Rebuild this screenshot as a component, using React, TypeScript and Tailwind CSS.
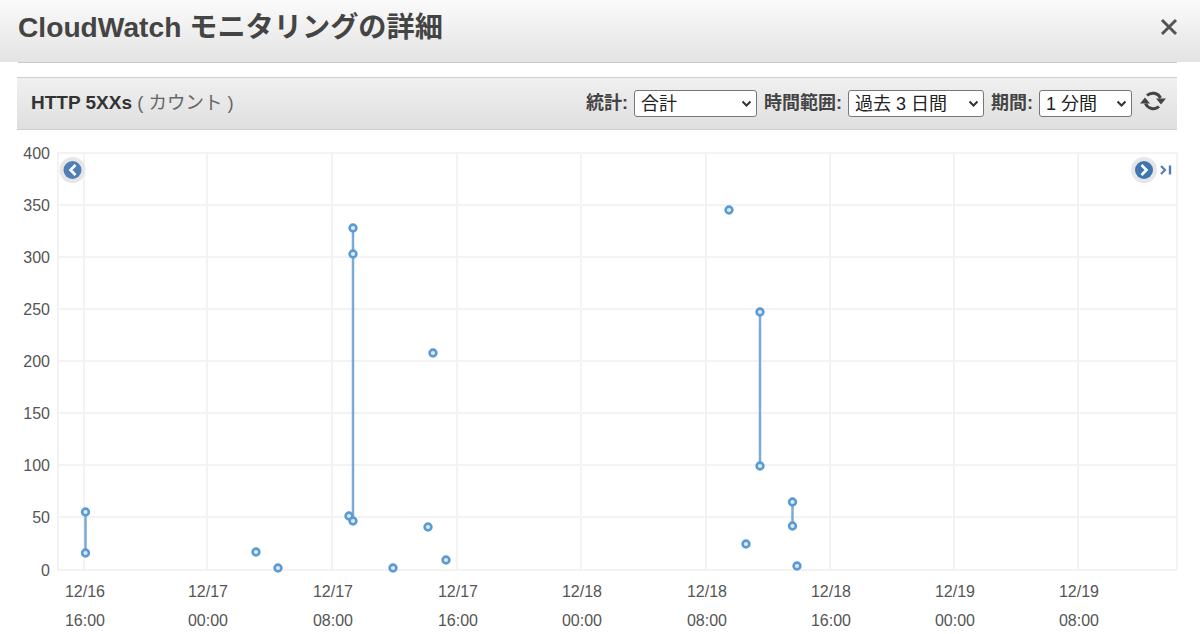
const font = { fontFamily: '"Liberation Sans", "Noto Sans CJK JP", sans-serif' };

const gridX = [84, 207, 332, 457, 581, 706, 830, 954, 1078];
const gridY = [153, 205, 257, 309, 361, 413, 465, 517, 570];
const yLabels = ["400", "350", "300", "250", "200", "150", "100", "50", "0"];
const xLabels = [
  ["12/16", "16:00"],
  ["12/17", "00:00"],
  ["12/17", "08:00"],
  ["12/17", "16:00"],
  ["12/18", "00:00"],
  ["12/18", "08:00"],
  ["12/18", "16:00"],
  ["12/19", "00:00"],
  ["12/19", "08:00"],
];

const lines = [
  [85.5, 512, 85.5, 553],
  [353, 228, 353, 520],
  [760, 312, 760, 466],
  [792.5, 502, 792.5, 526],
];

const points = [
  [85.5, 512], [85.5, 553], [256, 552], [278, 568], [349, 516], [353, 521],
  [353, 228], [353, 254], [393, 568], [433, 353], [428, 527], [446, 560],
  [729, 210], [746, 544], [760, 312], [760, 466], [792.5, 502], [792.5, 526], [797, 566],
];

function Field({ label, value, width }: { label: string; value: string; width: string }) {
  return (
    <div className="flex items-center gap-[6px]">
      <span className="text-[18px] font-bold text-[#444]">{label}</span>
      <div className={`relative ${width}`}>
        <select
          defaultValue={value}
          style={font}
          className="block h-[27px] w-full appearance-none rounded-[3px] border border-[#777] bg-white pl-[6px] text-[18px] text-[#222]"
        >
          <option>{value}</option>
        </select>
        <svg className="absolute right-[5px] top-[10px] h-[8px] w-[11px]" viewBox="0 0 11 8">
          <path d="M1.5 1.5 5.5 5.5 9.5 1.5" fill="none" stroke="#333" strokeWidth="2" />
        </svg>
      </div>
    </div>
  );
}

export default function App() {
  return (
    <div className="h-[634px] w-[1200px] overflow-hidden bg-white" style={font}>
      {/* Modal title */}
      <div className="flex h-[62px] items-start justify-between bg-gradient-to-b from-[#fbfbfb] to-[#e3e3e3] pl-[18px] pr-[22px] pt-[10px]">
        <h1 className="text-[28.2px] font-bold leading-[34px] text-[#444]">CloudWatch モニタリングの詳細</h1>
        <svg className="mt-[8px] h-[18px] w-[18px]" viewBox="0 0 18 18">
          <path d="M2 2 16 16M16 2 2 16" stroke="#555" strokeWidth="3" />
        </svg>
      </div>

      <div className="ml-[18px] mr-[23px] h-px bg-[#c9c9c9]" />

      {/* Metric toolbar */}
      <div className="ml-[17px] mr-[23px] mt-[14px] flex h-[53px] items-center justify-between border-y border-[#cfcfcf] bg-gradient-to-b from-[#f0f0f0] to-[#dfdfdf] pl-[14px] pr-[10px]">
        <div className="text-[18.5px] text-[#666]">
          <span className="text-[19px] font-bold text-[#333]">HTTP 5XXs</span> ( カウント )
        </div>
        <div className="flex items-center gap-[7px]">
          <Field label="統計:" value="合計" width="w-[123px]" />
          <Field label="時間範囲:" value="過去 3 日間" width="w-[136px]" />
          <Field label="期間:" value="1 分間" width="w-[93px]" />
          <svg className="mb-[5px] h-[24px] w-[28px]" viewBox="0 0 28 24">
            <g fill="none" stroke="#444" strokeWidth="3">
              <path d="M8 6.5A8.5 8.5 0 0 1 21.5 9" />
              <path d="M20 17.5A8.5 8.5 0 0 1 6.5 14.5" />
            </g>
            <path d="M17 9.5H27L22 15.5ZM1 14.5H11L6 8.5Z" fill="#444" />
          </svg>
        </div>
      </div>

      {/* Chart */}
      <svg className="block" width="1200" height="504" viewBox="0 130 1200 504">
        <g stroke="#f3f3f3" strokeWidth="2">
          {gridY.map((y) => (
            <line key={y} x1="57" y1={y} x2="1177" y2={y} />
          ))}
          <line x1="58" y1="153" x2="58" y2="570" />
          <line x1="1177" y1="153" x2="1177" y2="570" />
          {gridX.map((x) => (
            <line key={x} x1={x} y1="153" x2={x} y2="570" />
          ))}
        </g>

        <g fill="#555" fontSize="16">
          {yLabels.map((label, i) => (
            <text key={label} x="50" y={gridY[i] + 6} textAnchor="end">
              {label}
            </text>
          ))}
          {xLabels.map(([date, time], i) => (
            <g key={i} textAnchor="middle">
              <text x={gridX[i] + 1} y="597">{date}</text>
              <text x={gridX[i] + 1} y="626">{time}</text>
            </g>
          ))}
        </g>

        {lines.map(([x1, y1, x2, y2], i) => (
          <line key={i} x1={x1} y1={y1} x2={x2} y2={y2} stroke="#7aabd8" strokeWidth="2.5" />
        ))}
        {points.map(([x, y], i) => (
          <circle key={i} cx={x} cy={y} r="3.4" fill="#dce9f5" stroke="#5b9bd5" strokeWidth="2.6" />
        ))}

        {/* Scroll left */}
        <circle cx="72.5" cy="170" r="13" fill="#e6e6e6" />
        <circle cx="72.5" cy="170" r="9" fill="#4f7fb5" />
        <path d="M75.5 165 70.5 170 75.5 175" fill="none" stroke="#fff" strokeWidth="2.6" />

        {/* Scroll right */}
        <circle cx="1144" cy="170" r="13" fill="#e6e6e6" />
        <circle cx="1144" cy="170" r="9" fill="#3f76b0" />
        <path d="M1141.5 165 1146.5 170 1141.5 175" fill="none" stroke="#fff" strokeWidth="2.6" />
        <path d="M1161 166 1165 170 1161 174" fill="none" stroke="#4f7fb5" strokeWidth="2.2" />
        <path d="M1170 165.5V174.5" fill="none" stroke="#4f7fb5" strokeWidth="2.4" />
      </svg>
    </div>
  );
}
